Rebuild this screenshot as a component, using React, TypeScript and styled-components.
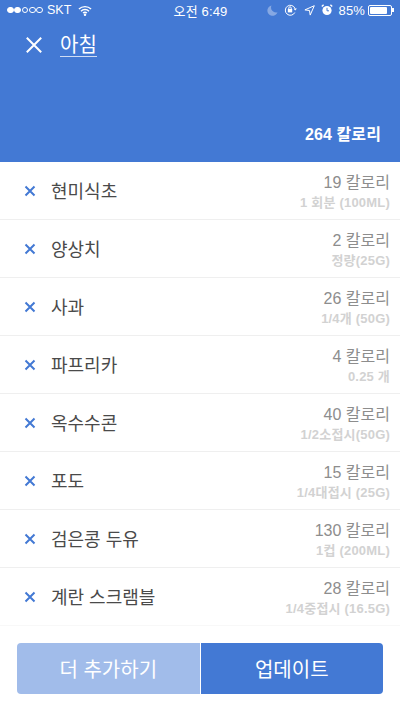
import styled, { createGlobalStyle } from "styled-components";

const GlobalStyle = createGlobalStyle`
  html, body {
    margin: 0;
    padding: 0;
    background: #fff;
    font-family: "Liberation Sans", "Noto Sans CJK KR", sans-serif;
  }
  * {
    box-sizing: border-box;
  }
`;

const Page = styled.div`
  width: 400px;
  height: 711px;
  overflow: hidden;
  display: flex;
  flex-direction: column;
  background: #fff;
`;

const Header = styled.header`
  height: 162px;
  background: #4379d4;
  color: #fff;
  display: flex;
  flex-direction: column;
  flex-shrink: 0;
`;

const StatusBar = styled.div`
  height: 20px;
  padding: 0 6px 0 7px;
  display: grid;
  grid-template-columns: 1fr auto 1fr;
  align-items: center;
  font-size: 13px;
  letter-spacing: 0.15px;
`;

const StatusLeft = styled.div`
  display: flex;
  align-items: center;
  gap: 4px;
`;

const Carrier = styled.span`
  font-size: 12.5px;
  letter-spacing: 0;
`;

const WifiIcon = styled.svg`
  margin-left: 3px;
`;

const StatusRight = styled.div`
  display: flex;
  align-items: center;
  justify-content: flex-end;
  gap: 6px;
`;

const Signal = styled.div`
  display: flex;
  gap: 0.5px;
`;

const Dot = styled.span<{ $on: boolean }>`
  width: 6.8px;
  height: 6.8px;
  border-radius: 50%;
  border: 0.8px solid #fff;
  background: ${(p) => (p.$on ? "#fff" : "transparent")};
`;

const Battery = styled.div`
  width: 24px;
  height: 11px;
  border: 1px solid #fff;
  border-radius: 2px;
  padding: 1px;
  position: relative;
  margin: 0 2px 0 -3px;
  &::after {
    content: "";
    position: absolute;
    right: -3px;
    top: 2.5px;
    width: 2px;
    height: 4px;
    background: #fff;
  }
`;

const BatteryFill = styled.div`
  height: 100%;
  background: #fff;
  border-radius: 1px;
`;

const TitleRow = styled.div`
  display: flex;
  align-items: center;
  padding: 13px 0 0 26px;
  gap: 18px;
`;

const Title = styled.h1`
  margin: 0;
  font-size: 20px;
  font-weight: 400;
  line-height: 24px;
  height: 24px;
  border-bottom: 1px solid #cfdcf4;
`;

const Total = styled.div`
  margin-top: auto;
  padding: 0 19px 17px 0;
  text-align: right;
  font-size: 16px;
  letter-spacing: 0.1px;
  font-weight: 700;
  line-height: 20px;
`;

const List = styled.ul`
  margin: 0;
  padding: 0;
  list-style: none;
`;

const Row = styled.li`
  height: 58px;
  border-bottom: 1px solid #efefef;
  padding: 0 10px 0 24px;
  display: flex;
  align-items: center;
  &:last-child {
    border-bottom-color: #f8f8f8;
  }
`;

const RemoveIcon = styled.svg`
  width: 12px;
  height: 12px;
  flex-shrink: 0;
  margin-right: 15px;
`;

const FoodName = styled.span`
  flex: 1;
  font-size: 18px;
  color: #4a4a4a;
  margin-top: -2px;
`;

const Amounts = styled.div`
  display: flex;
  flex-direction: column;
  align-items: flex-end;
`;

const Calories = styled.span`
  font-size: 16px;
  line-height: 20px;
  color: #8d8d8d;
  margin-top: 2px;
`;

const Serving = styled.span`
  margin-top: 2px;
  font-size: 13px;
  letter-spacing: 0.2px;
  line-height: 16px;
  font-weight: 700;
  color: #d2d2d2;
`;

const Footer = styled.div`
  display: flex;
  gap: 1px;
  padding: 17px 17px 0;
`;

const ActionButton = styled.button<{ $primary?: boolean }>`
  height: 51px;
  padding: 0;
  border: none;
  color: #fff;
  font-family: inherit;
  font-size: 20px;
  background: ${(p) => (p.$primary ? "#4379d4" : "#a1bcea")};
  border-radius: ${(p) => (p.$primary ? "0 4px 4px 0" : "4px 0 0 4px")};
  flex: 1;
`;

const foods = [
  { name: "현미식초", cal: "19 칼로리", serving: "1 회분 (100ML)" },
  { name: "양상치", cal: "2 칼로리", serving: "정량(25G)" },
  { name: "사과", cal: "26 칼로리", serving: "1/4개 (50G)" },
  { name: "파프리카", cal: "4 칼로리", serving: "0.25 개" },
  { name: "옥수수콘", cal: "40 칼로리", serving: "1/2소접시(50G)" },
  { name: "포도", cal: "15 칼로리", serving: "1/4대접시 (25G)" },
  { name: "검은콩 두유", cal: "130 칼로리", serving: "1컵 (200ML)" },
  { name: "계란 스크램블", cal: "28 칼로리", serving: "1/4중접시 (16.5G)" },
];

const App = () => (
  <Page>
    <GlobalStyle />
    <Header>
      <StatusBar>
        <StatusLeft>
          <Signal>
            {[true, true, false, false, false].map((on, i) => (
              <Dot key={i} $on={on} />
            ))}
          </Signal>
          <Carrier>SKT</Carrier>
          <WifiIcon width="14" height="11" viewBox="0 0 15 11" fill="none" stroke="#fff" strokeWidth="1.5">
            <path d="M1 4a9.2 9.2 0 0 1 13 0" />
            <path d="M3.2 6.2a6 6 0 0 1 8.6 0" />
            <path d="M5.4 8.3a3 3 0 0 1 4.2 0" />
            <circle cx="7.5" cy="10" r="0.6" fill="#fff" />
          </WifiIcon>
        </StatusLeft>
        <span>오전 6:49</span>
        <StatusRight>
          <svg width="11" height="11" viewBox="0 0 11 11">
            <path d="M4.5 0.5a5.2 5.2 0 1 0 6 6.8A5 5 0 0 1 4.5 0.5z" fill="#86a8e3" />
          </svg>
          <svg width="14" height="12" viewBox="0 0 14 12" fill="none" stroke="#fff" strokeWidth="1">
            <path d="M10.8 8.5A5 5 0 1 1 11 4.5" />
            <path d="M9.5 4.5h3.4L11.2 6.5z" fill="#fff" stroke="none" />
            <rect x="3.8" y="5" width="4.4" height="3.4" fill="#fff" stroke="none" />
            <path d="M4.8 5V4a1.2 1.2 0 0 1 2.4 0v1" />
          </svg>
          <svg width="11" height="11" viewBox="0 0 11 11" fill="none" stroke="#fff" strokeWidth="1">
            <path d="M10.3 0.7 0.9 4.9l4.6 0.6 0.7 4.6z" />
          </svg>
          <svg width="12" height="12" viewBox="0 0 12 12">
            <circle cx="6" cy="6.5" r="4.6" fill="#fff" />
            <path d="M6 3.8v3h2" fill="none" stroke="#4379d4" strokeWidth="1" />
            <path d="M0.8 2.6 2.6 0.8M11.2 2.6 9.4 0.8" stroke="#fff" strokeWidth="1.4" />
          </svg>
          <span>85%</span>
          <Battery>
            <BatteryFill style={{ width: "85%" }} />
          </Battery>
        </StatusRight>
      </StatusBar>
      <TitleRow>
        <svg width="16" height="16" viewBox="0 0 16 16" stroke="#fff" strokeWidth="2" fill="none">
          <path d="M0.8 0.8l14.4 14.4M15.2 0.8l-14.4 14.4" />
        </svg>
        <Title>아침</Title>
      </TitleRow>
      <Total>264 칼로리</Total>
    </Header>
    <List>
      {foods.map((f) => (
        <Row key={f.name}>
          <RemoveIcon viewBox="0 0 12 12" stroke="#4379d4" strokeWidth="2" fill="none">
            <path d="M1.5 1.5l9 9M10.5 1.5l-9 9" />
          </RemoveIcon>
          <FoodName>{f.name}</FoodName>
          <Amounts>
            <Calories>{f.cal}</Calories>
            <Serving>{f.serving}</Serving>
          </Amounts>
        </Row>
      ))}
    </List>
    <Footer>
      <ActionButton>더 추가하기</ActionButton>
      <ActionButton $primary>업데이트</ActionButton>
    </Footer>
  </Page>
);

export default App;
